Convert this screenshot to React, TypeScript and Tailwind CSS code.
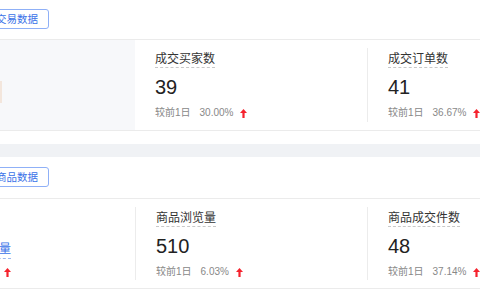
import React from "react";

const FONT = { fontFamily: '"Liberation Sans", "Noto Sans CJK SC", sans-serif' };

function UpArrow() {
  return (
    <svg width="7" height="9" viewBox="0 0 7 9" className="inline-block">
      <path d="M3.5 0 L7 4 L4.6 4 L4.6 9 L2.4 9 L2.4 4 L0 4 Z" fill="#f5222d" />
    </svg>
  );
}

function Stat({ label, value, pct, border = true }: { label: string; value: string; pct: string; border?: boolean }) {
  return (
    <div className="w-[232px] shrink-0 py-[8px]">
      <div className={`h-full pl-[20px] pt-[1px] ${border ? "border-l border-[#ececec]" : ""}`}>
        <div className="leading-[18px]">
          <span className="text-[12px] text-[#333] border-b border-dashed border-[#c8c8c8] pb-[1px]">{label}</span>
        </div>
        <div className="mt-[6px] text-[20px] leading-[26px] text-[#222]">{value}</div>
        <div className="mt-[5px] flex items-center text-[10px] leading-[16px] text-[#888]">
          <span>较前1日</span>
          <span className="ml-[9px] text-[#888]">{pct}</span>
          <span className="ml-[7px] flex items-center"><UpArrow /></span>
        </div>
      </div>
    </div>
  );
}

function TabButton({ text }: { text: string }) {
  return (
    <div className="w-[49px] h-[20px] flex justify-end">
      <div className="shrink-0 h-[20px] px-[10px] border border-[#8fb0f7] rounded-[3px] text-[10.5px] leading-[18px] text-[#3a72e8] whitespace-nowrap">
        {text}
      </div>
    </div>
  );
}

export default function App() {
  return (
    <div className="w-[480px] h-[300px] overflow-hidden bg-white relative" style={FONT}>
      <div className="pt-[9px]">
        <TabButton text="交易数据" />
      </div>
      <div className="mt-[10px] border-t border-b border-[#ebebeb] h-[92px] flex ml-[-97px]">
        <div className="w-[232px] shrink-0 bg-[#f7f8fa] relative">
          <div className="absolute left-[97px] top-[41px] w-[2px] h-[22px] bg-[#f3e6dc]" />
        </div>
        <Stat label="成交买家数" value="39" pct="30.00%" border={false} />
        <Stat label="成交订单数" value="41" pct="36.67%" />
      </div>
      <div className="mt-[13px] h-[13px] bg-[#f0f2f5]" />
      <div className="pt-[10px]">
        <TabButton text="商品数据" />
      </div>
      <div className="mt-[11px] border-t border-b border-[#ebebeb] h-[91px] flex ml-[-97px]">
        <div className="w-[232px] shrink-0 py-[8px]">
          <div className="h-full flex flex-col items-end pr-[124px] pt-[33px]">
            <span className="text-[12px] leading-[18px] text-[#3a72e8] border-b border-dashed border-[#9bb6ee] whitespace-nowrap">商品访客量</span>
            <div className="mt-[5px] flex items-center text-[10px] leading-[16px] text-[#888] whitespace-nowrap">
              <span>12.50%</span>
              <span className="ml-[7px] flex items-center"><UpArrow /></span>
            </div>
          </div>
        </div>
        <Stat label="商品浏览量" value="510" pct="6.03%" />
        <Stat label="商品成交件数" value="48" pct="37.14%" />
      </div>
    </div>
  );
}
